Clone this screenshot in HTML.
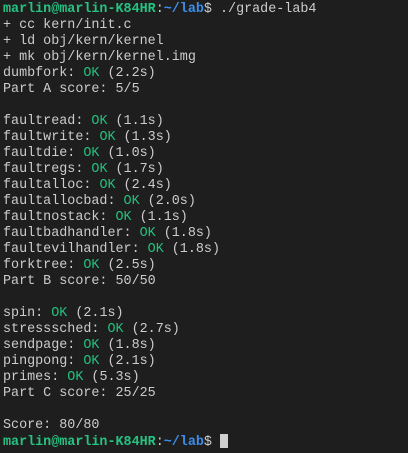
<!DOCTYPE html>
<html><head><style>
html,body{margin:0;padding:0;background:#1e1e1e;width:408px;height:453px;overflow:hidden}
pre{margin:0;padding:2px 0 0 3px;font-family:"Liberation Mono",monospace;font-size:13.4px;line-height:16px;color:#cccccc;white-space:pre}
.u{color:#26c281;font-weight:bold}.p{color:#3b8eea;font-weight:bold}.g{color:#23c17c}
.c{display:inline-block;width:8px;height:14px;background:#d0d0d0;vertical-align:-3px}
</style></head><body><pre><span class="u">marlin@marlin-K84HR</span>:<span class="p">~/lab</span>$ ./grade-lab4
+ cc kern/init.c
+ ld obj/kern/kernel
+ mk obj/kern/kernel.img
dumbfork: <span class="g">OK</span> (2.2s)
Part A score: 5/5

faultread: <span class="g">OK</span> (1.1s)
faultwrite: <span class="g">OK</span> (1.3s)
faultdie: <span class="g">OK</span> (1.0s)
faultregs: <span class="g">OK</span> (1.7s)
faultalloc: <span class="g">OK</span> (2.4s)
faultallocbad: <span class="g">OK</span> (2.0s)
faultnostack: <span class="g">OK</span> (1.1s)
faultbadhandler: <span class="g">OK</span> (1.8s)
faultevilhandler: <span class="g">OK</span> (1.8s)
forktree: <span class="g">OK</span> (2.5s)
Part B score: 50/50

spin: <span class="g">OK</span> (2.1s)
stresssched: <span class="g">OK</span> (2.7s)
sendpage: <span class="g">OK</span> (1.8s)
pingpong: <span class="g">OK</span> (2.1s)
primes: <span class="g">OK</span> (5.3s)
Part C score: 25/25

Score: 80/80
<span class="u">marlin@marlin-K84HR</span>:<span class="p">~/lab</span>$ <span class="c"></span></pre></body></html>
